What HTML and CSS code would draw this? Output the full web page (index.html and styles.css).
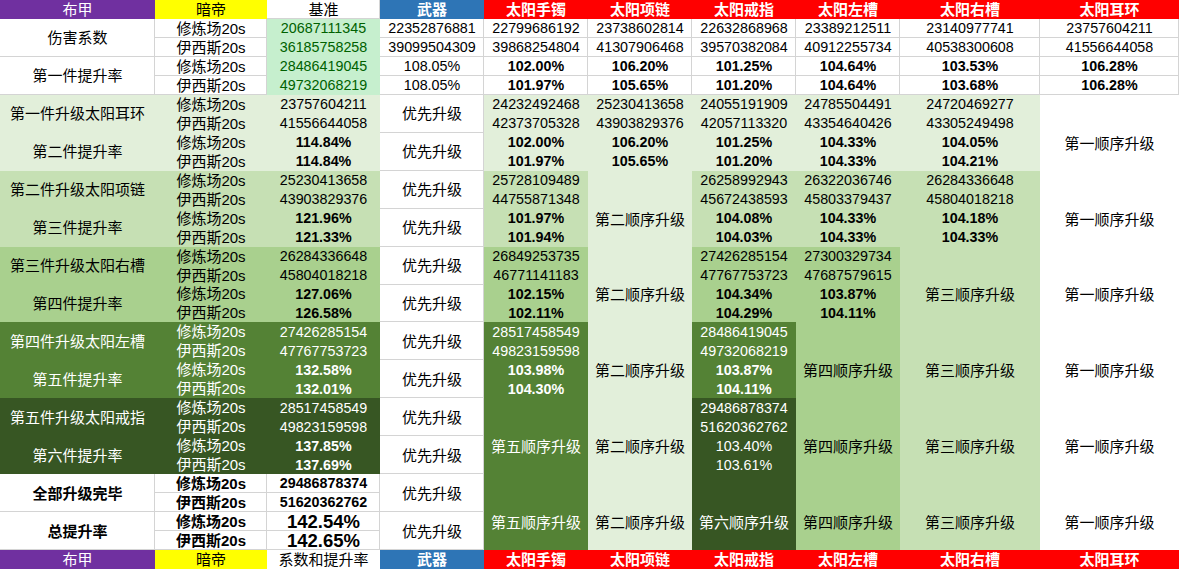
FILE: index.html
```html
<!DOCTYPE html>
<html lang="zh">
<head>
<meta charset="utf-8">
<title>布甲 升级顺序</title>
<link rel="stylesheet" href="styles.css">
</head>
<body>
<div class="sheet">
  <!-- header -->
  <div class="c hp">布甲</div>
  <div class="c hy">暗帝</div>
  <div class="c hw g">基准</div>
  <div class="c hb">武器</div>
  <div class="c hr">太阳手镯</div>
  <div class="c hr">太阳项链</div>
  <div class="c hr">太阳戒指</div>
  <div class="c hr">太阳左槽</div>
  <div class="c hr">太阳右槽</div>
  <div class="c hr">太阳耳环</div>

  <!-- section A -->
  <div class="c g r2">伤害系数</div>
  <div class="c g">修炼场20s</div>
  <div class="c good n">20687111345</div>
  <div class="c g n">22352876881</div>
  <div class="c g n">22799686192</div>
  <div class="c g n">23738602814</div>
  <div class="c g n">22632868968</div>
  <div class="c g n">23389212511</div>
  <div class="c g n">23140977741</div>
  <div class="c g n">23757604211</div>

  <div class="c g">伊西斯20s</div>
  <div class="c good n">36185758258</div>
  <div class="c g n">39099504309</div>
  <div class="c g n">39868254804</div>
  <div class="c g n">41307906468</div>
  <div class="c g n">39570382084</div>
  <div class="c g n">40912255734</div>
  <div class="c g n">40538300608</div>
  <div class="c g n">41556644058</div>

  <div class="c g r2">第一件提升率</div>
  <div class="c g">修炼场20s</div>
  <div class="c good n">28486419045</div>
  <div class="c g n">108.05%</div>
  <div class="c g n b">102.00%</div>
  <div class="c g n b">106.20%</div>
  <div class="c g n b">101.25%</div>
  <div class="c g n b">104.64%</div>
  <div class="c g n b">103.53%</div>
  <div class="c g n b">106.28%</div>

  <div class="c g">伊西斯20s</div>
  <div class="c good n">49732068219</div>
  <div class="c g n">108.05%</div>
  <div class="c g n b">101.97%</div>
  <div class="c g n b">105.65%</div>
  <div class="c g n b">101.20%</div>
  <div class="c g n b">104.64%</div>
  <div class="c g n b">103.68%</div>
  <div class="c g n b">106.28%</div>

  <!-- section B -->
  <div class="c s1 r2">第一件升级太阳耳环</div>
  <div class="c s1">修炼场20s</div>
  <div class="c s1 n">23757604211</div>
  <div class="c g r2">优先升级</div>
  <div class="c s1 n">24232492468</div>
  <div class="c s1 n">25230413658</div>
  <div class="c s1 n">24055191909</div>
  <div class="c s1 n">24785504491</div>
  <div class="c s1 n">24720469277</div>
  <div class="c r4">第一顺序升级</div>

  <div class="c s1">伊西斯20s</div>
  <div class="c s1 n">41556644058</div>
  <div class="c s1 n">42373705328</div>
  <div class="c s1 n">43903829376</div>
  <div class="c s1 n">42057113320</div>
  <div class="c s1 n">43354640426</div>
  <div class="c s1 n">43305249498</div>

  <div class="c s1 r2">第二件提升率</div>
  <div class="c s1">修炼场20s</div>
  <div class="c s1 n b">114.84%</div>
  <div class="c g r2">优先升级</div>
  <div class="c s1 n b">102.00%</div>
  <div class="c s1 n b">106.20%</div>
  <div class="c s1 n b">101.25%</div>
  <div class="c s1 n b">104.33%</div>
  <div class="c s1 n b">104.05%</div>

  <div class="c s1">伊西斯20s</div>
  <div class="c s1 n b">114.84%</div>
  <div class="c s1 n b">101.97%</div>
  <div class="c s1 n b">105.65%</div>
  <div class="c s1 n b">101.20%</div>
  <div class="c s1 n b">104.33%</div>
  <div class="c s1 n b">104.21%</div>

  <!-- section C -->
  <div class="c s2 r2">第二件升级太阳项链</div>
  <div class="c s2">修炼场20s</div>
  <div class="c s2 n">25230413658</div>
  <div class="c g r2">优先升级</div>
  <div class="c s2 n">25728109489</div>
  <div class="c s1 r4">第二顺序升级</div>
  <div class="c s2 n">26258992943</div>
  <div class="c s2 n">26322036746</div>
  <div class="c s2 n">26284336648</div>
  <div class="c r4">第一顺序升级</div>

  <div class="c s2">伊西斯20s</div>
  <div class="c s2 n">43903829376</div>
  <div class="c s2 n">44755871348</div>
  <div class="c s2 n">45672438593</div>
  <div class="c s2 n">45803379437</div>
  <div class="c s2 n">45804018218</div>

  <div class="c s2 r2">第三件提升率</div>
  <div class="c s2">修炼场20s</div>
  <div class="c s2 n b">121.96%</div>
  <div class="c g r2">优先升级</div>
  <div class="c s2 n b">101.97%</div>
  <div class="c s2 n b">104.08%</div>
  <div class="c s2 n b">104.33%</div>
  <div class="c s2 n b">104.18%</div>

  <div class="c s2">伊西斯20s</div>
  <div class="c s2 n b">121.33%</div>
  <div class="c s2 n b">101.94%</div>
  <div class="c s2 n b">104.03%</div>
  <div class="c s2 n b">104.33%</div>
  <div class="c s2 n b">104.33%</div>

  <!-- section D -->
  <div class="c s3 r2">第三件升级太阳右槽</div>
  <div class="c s3">修炼场20s</div>
  <div class="c s3 n">26284336648</div>
  <div class="c g r2">优先升级</div>
  <div class="c s3 n">26849253735</div>
  <div class="c s1 r4">第二顺序升级</div>
  <div class="c s3 n">27426285154</div>
  <div class="c s3 n">27300329734</div>
  <div class="c s2 r4">第三顺序升级</div>
  <div class="c r4">第一顺序升级</div>

  <div class="c s3">伊西斯20s</div>
  <div class="c s3 n">45804018218</div>
  <div class="c s3 n">46771141183</div>
  <div class="c s3 n">47767753723</div>
  <div class="c s3 n">47687579615</div>

  <div class="c s3 r2">第四件提升率</div>
  <div class="c s3">修炼场20s</div>
  <div class="c s3 n b">127.06%</div>
  <div class="c g r2">优先升级</div>
  <div class="c s3 n b">102.15%</div>
  <div class="c s3 n b">104.34%</div>
  <div class="c s3 n b">103.87%</div>

  <div class="c s3">伊西斯20s</div>
  <div class="c s3 n b">126.58%</div>
  <div class="c s3 n b">102.11%</div>
  <div class="c s3 n b">104.29%</div>
  <div class="c s3 n b">104.11%</div>

  <!-- section E -->
  <div class="c s4 r2">第四件升级太阳左槽</div>
  <div class="c s4">修炼场20s</div>
  <div class="c s4 n">27426285154</div>
  <div class="c g r2">优先升级</div>
  <div class="c s4 n">28517458549</div>
  <div class="c s1 r4">第二顺序升级</div>
  <div class="c s4 n">28486419045</div>
  <div class="c s3 r4">第四顺序升级</div>
  <div class="c s2 r4">第三顺序升级</div>
  <div class="c r4">第一顺序升级</div>

  <div class="c s4">伊西斯20s</div>
  <div class="c s4 n">47767753723</div>
  <div class="c s4 n">49823159598</div>
  <div class="c s4 n">49732068219</div>

  <div class="c s4 r2">第五件提升率</div>
  <div class="c s4">修炼场20s</div>
  <div class="c s4 n b">132.58%</div>
  <div class="c g r2">优先升级</div>
  <div class="c s4 n b">103.98%</div>
  <div class="c s4 n b">103.87%</div>

  <div class="c s4">伊西斯20s</div>
  <div class="c s4 n b">132.01%</div>
  <div class="c s4 n b">104.30%</div>
  <div class="c s4 n b">104.11%</div>

  <!-- section F -->
  <div class="c s5 r2">第五件升级太阳戒指</div>
  <div class="c s5">修炼场20s</div>
  <div class="c s5 n">28517458549</div>
  <div class="c g r2">优先升级</div>
  <div class="c s4 r4">第五顺序升级</div>
  <div class="c s1 r4">第二顺序升级</div>
  <div class="c s5 n">29486878374</div>
  <div class="c s3 r4">第四顺序升级</div>
  <div class="c s2 r4">第三顺序升级</div>
  <div class="c r4">第一顺序升级</div>

  <div class="c s5">伊西斯20s</div>
  <div class="c s5 n">49823159598</div>
  <div class="c s5 n">51620362762</div>

  <div class="c s5 r2">第六件提升率</div>
  <div class="c s5">修炼场20s</div>
  <div class="c s5 n b">137.85%</div>
  <div class="c g r2">优先升级</div>
  <div class="c s5 n">103.40%</div>

  <div class="c s5">伊西斯20s</div>
  <div class="c s5 n b">137.69%</div>
  <div class="c s5 n">103.61%</div>

  <!-- section G -->
  <div class="c g r2 b">全部升级完毕</div>
  <div class="c g b">修炼场20s</div>
  <div class="c g n b">29486878374</div>
  <div class="c g r2">优先升级</div>
  <div class="c s4 r4">第五顺序升级</div>
  <div class="c s1 r4">第二顺序升级</div>
  <div class="c s5 r4">第六顺序升级</div>
  <div class="c s3 r4">第四顺序升级</div>
  <div class="c s2 r4">第三顺序升级</div>
  <div class="c r4">第一顺序升级</div>

  <div class="c g b">伊西斯20s</div>
  <div class="c g n b">51620362762</div>

  <div class="c g r2 b">总提升率</div>
  <div class="c g b">修炼场20s</div>
  <div class="c g big">142.54%</div>
  <div class="c g r2">优先升级</div>

  <div class="c g b">伊西斯20s</div>
  <div class="c g big">142.65%</div>

  <!-- footer header -->
  <div class="c hp">布甲</div>
  <div class="c hy">暗帝</div>
  <div class="c hw">系数和提升率</div>
  <div class="c hb">武器</div>
  <div class="c hr">太阳手镯</div>
  <div class="c hr">太阳项链</div>
  <div class="c hr">太阳戒指</div>
  <div class="c hr">太阳左槽</div>
  <div class="c hr">太阳右槽</div>
  <div class="c hr">太阳耳环</div>
</div>
</body>
</html>
```

FILE: styles.css
```css
* { box-sizing: border-box; }

html, body {
  margin: 0;
  padding: 0;
  background: #ffffff;
}

.sheet {
  display: grid;
  grid-template-columns: 155px 112px 113px 104px 104px 104px 104px 104px 140px 139px;
  grid-template-rows: repeat(30, 1fr);
  width: 1179px;
  height: 569px;
  font-family: "Liberation Sans", "Noto Sans CJK SC", sans-serif;
  font-size: 15px;
  color: #000000;
  background: #ffffff;
}

.c {
  display: flex;
  align-items: center;
  justify-content: center;
  white-space: nowrap;
  line-height: 1;
  min-width: 0;
  min-height: 0;
}

/* grid lines on unfilled cells */
.g { box-shadow: inset -1px -1px 0 #d4d4d4; }

/* spans; the long merged cells put their label a row below the middle */
.r2 { grid-row: span 2; }
.r4 {
  grid-row: span 4;
  padding-top: 19px;
  font-family: "Noto Sans CJK SC", "Liberation Sans", sans-serif;
}

/* text styles */
.n { font-size: 14.3px; }
.b { font-weight: bold; }
.big { font-size: 18.5px; font-weight: bold; line-height: 18px; }

/* header cells */
.hp { background: #7030a0; color: #ffffff; }
.hy { background: #ffff00; color: #000000; }
.hw { background: #ffffff; color: #000000; }
.hb { background: #2e75b6; color: #ffffff; font-weight: bold; }
.hr { background: #ff0000; color: #ffffff; font-weight: bold; }

/* fills */
.good { background: #c6efce; color: #006100; }
.s1 { background: #e2efda; }
.s2 { background: #c6e0b4; }
.s3 { background: #a9d08e; }
.s4 { background: #548235; color: #ffffff; }
.s5 { background: #375623; color: #ffffff; }
```
